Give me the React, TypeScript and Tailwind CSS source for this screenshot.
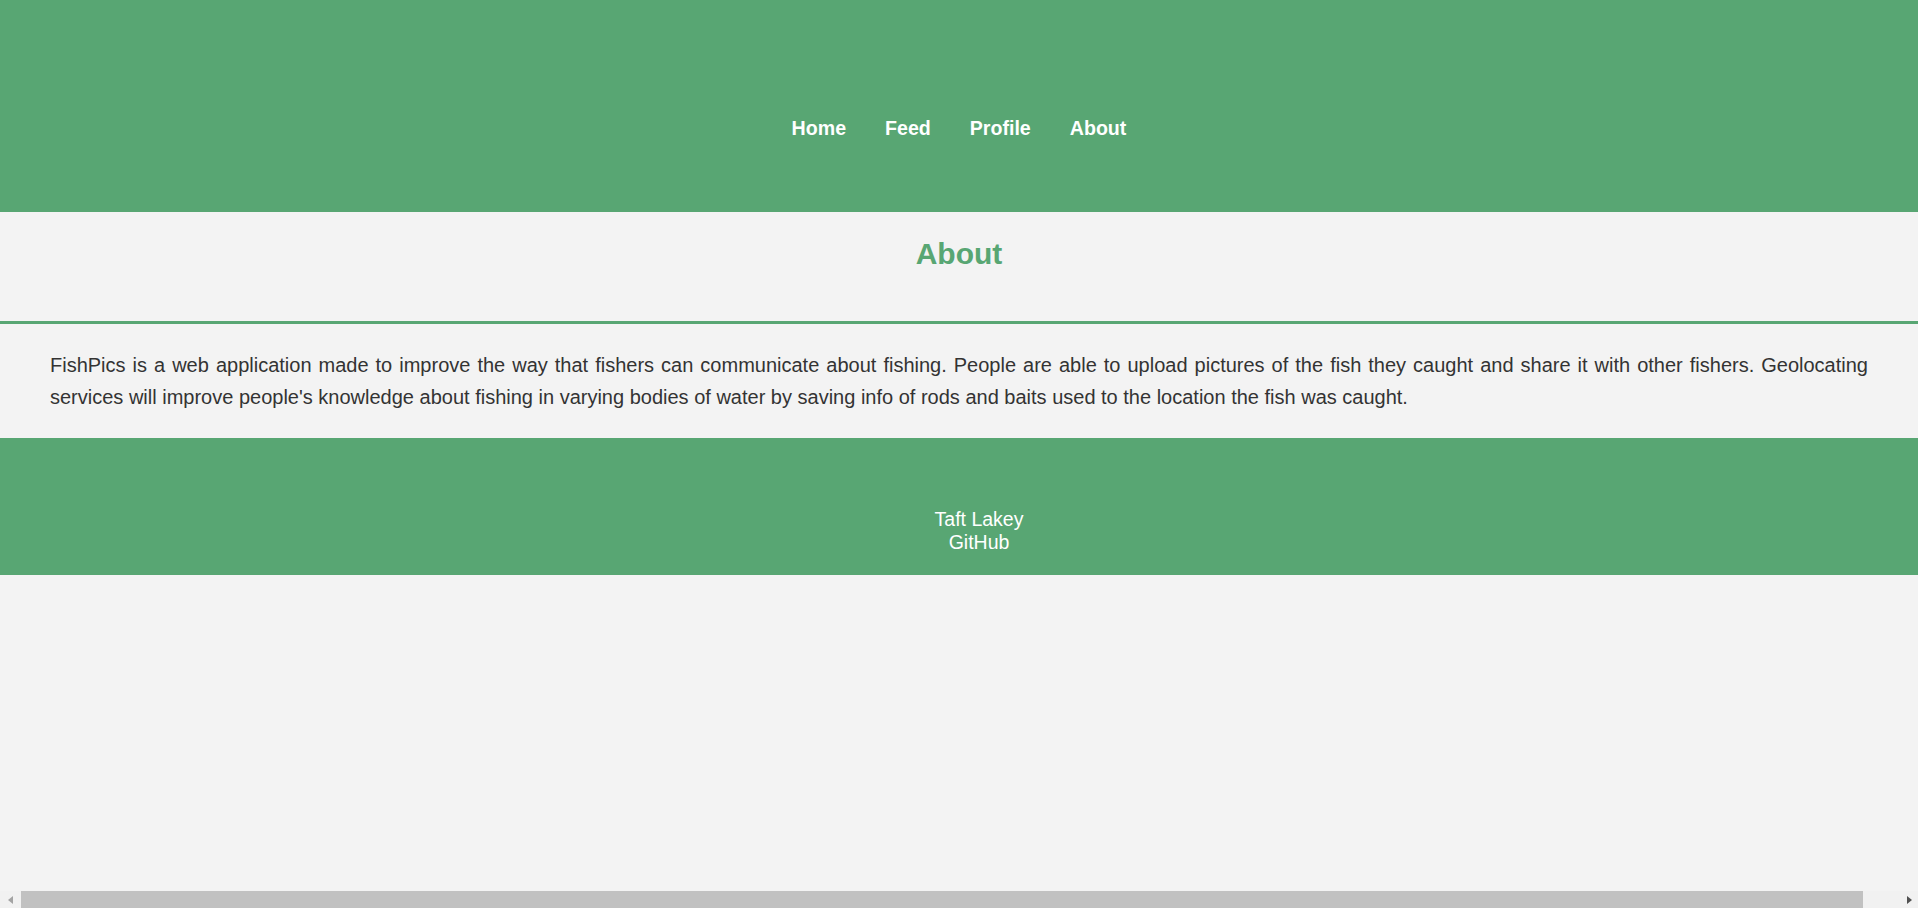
export default function App() {
  return (
    <div className="min-h-screen bg-[#f3f3f3] font-['Liberation_Sans',Arial,sans-serif]">
      <header className="h-[212px] bg-[#58a673] pt-[117px]">
        <nav className="flex justify-center gap-[39px] text-[19.6px] leading-[23px] font-bold text-white">
          <a href="#">Home</a>
          <a href="#">Feed</a>
          <a href="#">Profile</a>
          <a href="#">About</a>
        </nav>
      </header>
      <div className="h-[112px] border-b-[3px] border-[#58a673] pt-[24px]">
        <h2 className="text-center text-[30px] leading-[35px] font-bold text-[#58a673]">About</h2>
      </div>
      <p className="px-[50px] py-[25px] text-[20px] leading-[32px] text-justify text-[#333333]">
        FishPics is a web application made to improve the way that fishers can communicate about fishing. People are able to upload pictures of the fish they caught and share it with other fishers. Geolocating services will improve people's knowledge about fishing in varying bodies of water by saving info of rods and baits used to the location the fish was caught.
      </p>
      <footer className="box-content h-[67px] w-full bg-[#58a673] px-[20px] pt-[70px] text-center text-[19.5px] leading-[23px] text-white">
        <div>Taft Lakey</div>
        <div>GitHub</div>
      </footer>
      <div className="fixed bottom-0 left-0 flex h-[17px] w-[1918px] items-center bg-[#f1f1f1]">
        <div className="flex w-[21px] justify-center">
          <svg width="5" height="8" viewBox="0 0 5 8"><polygon points="5,0 5,8 0,4" fill="#a3a3a3" /></svg>
        </div>
        <div className="h-[17px] w-[1842px] bg-[#c1c1c1]" />
        <div className="flex flex-1 justify-end pr-[6px]">
          <svg width="5" height="8" viewBox="0 0 5 8"><polygon points="0,0 0,8 5,4" fill="#505050" /></svg>
        </div>
      </div>
    </div>
  );
}
